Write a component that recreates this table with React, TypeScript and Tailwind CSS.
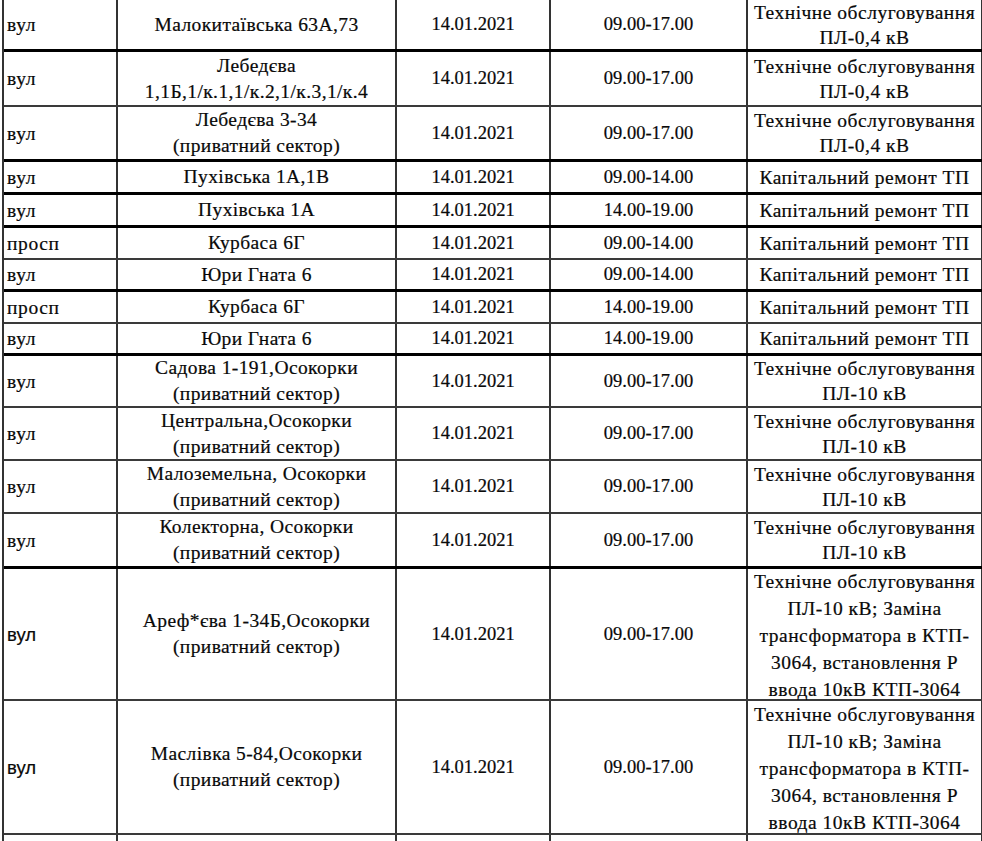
import React from 'react';

// Schedule of planned power outages (excerpt of a spreadsheet)

interface OutageRow {
  kind: string;
  address: string[];
  date: string;
  time: string;
  work: string[];
  height: string;
  thick?: boolean;
  sansKind?: boolean;
}

const TO_04 = ['Технічне обслуговування', 'ПЛ-0,4 кВ'];
const TO_10 = ['Технічне обслуговування', 'ПЛ-10 кВ'];
const KR = ['Капітальний ремонт ТП'];
const TO_KTP = [
  'Технічне обслуговування',
  'ПЛ-10 кВ; Заміна',
  'трансформатора в КТП-',
  '3064, встановлення Р',
  'ввода 10кВ КТП-3064',
];
const PRIVATE = '(приватний сектор)';

const rows: OutageRow[] = [
  { kind: 'вул', address: ['Малокитаївська 63А,73'], date: '14.01.2021', time: '09.00-17.00', work: TO_04, height: 'h-[52px]', thick: true },
  { kind: 'вул', address: ['Лебедєва', '1,1Б,1/к.1,1/к.2,1/к.3,1/к.4'], date: '14.01.2021', time: '09.00-17.00', work: TO_04, height: 'h-[55px]' },
  { kind: 'вул', address: ['Лебедєва 3-34', PRIVATE], date: '14.01.2021', time: '09.00-17.00', work: TO_04, height: 'h-[55px]', thick: true },
  { kind: 'вул', address: ['Пухівська 1А,1В'], date: '14.01.2021', time: '09.00-14.00', work: KR, height: 'h-[33px]', thick: true },
  { kind: 'вул', address: ['Пухівська 1А'], date: '14.01.2021', time: '14.00-19.00', work: KR, height: 'h-[33px]', thick: true },
  { kind: 'просп', address: ['Курбаса 6Г'], date: '14.01.2021', time: '09.00-14.00', work: KR, height: 'h-[32px]' },
  { kind: 'вул', address: ['Юри Гната 6'], date: '14.01.2021', time: '09.00-14.00', work: KR, height: 'h-[32px]', thick: true },
  { kind: 'просп', address: ['Курбаса 6Г'], date: '14.01.2021', time: '14.00-19.00', work: KR, height: 'h-[32px]' },
  { kind: 'вул', address: ['Юри Гната 6'], date: '14.01.2021', time: '14.00-19.00', work: KR, height: 'h-[32px]', thick: true },
  { kind: 'вул', address: ['Садова 1-191,Осокорки', PRIVATE], date: '14.01.2021', time: '09.00-17.00', work: TO_10, height: 'h-[52px]' },
  { kind: 'вул', address: ['Центральна,Осокорки', PRIVATE], date: '14.01.2021', time: '09.00-17.00', work: TO_10, height: 'h-[53px]' },
  { kind: 'вул', address: ['Малоземельна, Осокорки', PRIVATE], date: '14.01.2021', time: '09.00-17.00', work: TO_10, height: 'h-[53px]' },
  { kind: 'вул', address: ['Колекторна, Осокорки', PRIVATE], date: '14.01.2021', time: '09.00-17.00', work: TO_10, height: 'h-[55px]', thick: true },
  { kind: 'вул', address: ['Ареф*єва 1-34Б,Осокорки', PRIVATE], date: '14.01.2021', time: '09.00-17.00', work: TO_KTP, height: 'h-[132px]', sansKind: true },
  { kind: 'вул', address: ['Маслівка 5-84,Осокорки', PRIVATE], date: '14.01.2021', time: '09.00-17.00', work: TO_KTP, height: 'h-[134px]', sansKind: true },
];

const Lines: React.FC<{ lines: string[] }> = ({ lines }) => (
  <>
    {lines.map((l, i) => (
      <div key={i} className="whitespace-nowrap">
        {l}
      </div>
    ))}
  </>
);

const Row: React.FC<{ row: OutageRow }> = ({ row }) => {
  const bottom = row.thick ? 'border-b-[3px] border-b-black' : 'border-b-2 border-b-[#3a3a3a]';
  const tall = row.work.length > 2;
  return (
    <div className={`flex ${row.height} ${bottom}`}>
      <div
        className={`w-[114px] shrink-0 flex items-center pl-[3px] border-r-2 border-r-[#333] ${
          row.sansKind
            ? 'text-[18.5px] [font-family:Liberation_Sans,Arial,sans-serif]'
            : 'text-[19.5px] tracking-[0.6px]'
        }`}
      >
        {row.kind}
      </div>
      <div className="w-[279px] shrink-0 flex flex-col items-center justify-center text-center text-[19.5px] leading-[26px] tracking-[0.4px] border-r-2 border-r-[#333]">
        <Lines lines={row.address} />
      </div>
      <div className="w-[154px] shrink-0 flex items-center justify-center border-r-2 border-r-[#333]">
        {row.date}
      </div>
      <div className="w-[197px] shrink-0 flex items-center justify-center border-r-2 border-r-[#333]">
        {row.time}
      </div>
      <div
        className={`w-[235px] shrink-0 flex flex-col items-center justify-center text-center text-[19.5px] tracking-[0.5px] border-r-2 border-r-[#333] ${
          tall ? 'pt-[2px] leading-[27px]' : 'leading-[25px]'
        }`}
      >
        <Lines lines={row.work} />
      </div>
    </div>
  );
};

export default function App() {
  return (
    <div className="w-[982px] h-[841px] overflow-hidden bg-white text-[#0a0a0a] [font-family:Liberation_Serif,Times_New_Roman,serif] [-webkit-text-stroke:0.2px_#000]">
      <div className="ml-[2px] w-[983px] border-l-2 border-l-[#333] text-[18.5px] leading-[27px]">
        {rows.map((r, i) => (
          <Row key={i} row={r} />
        ))}
        <div className="flex h-[20px]">
          <div className="w-[114px] shrink-0 border-r-2 border-r-[#333]" />
          <div className="w-[279px] shrink-0 border-r-2 border-r-[#333]" />
          <div className="w-[154px] shrink-0 border-r-2 border-r-[#333]" />
          <div className="w-[197px] shrink-0 border-r-2 border-r-[#333]" />
          <div className="w-[235px] shrink-0 border-r-2 border-r-[#333]" />
        </div>
      </div>
    </div>
  );
}
